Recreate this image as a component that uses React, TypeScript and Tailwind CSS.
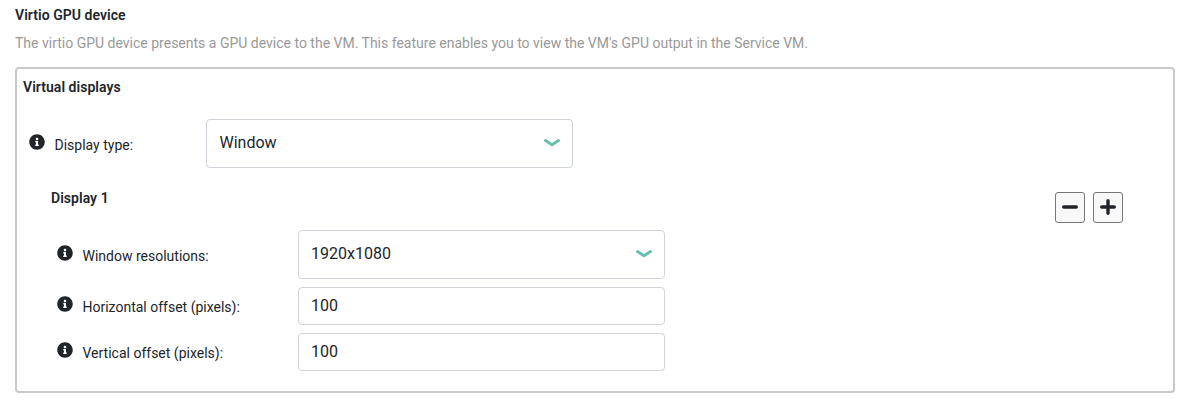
import { ReactNode } from "react";
import { FaInfoCircle } from "react-icons/fa";

function Label({ children, className }: { children: ReactNode; className: string }) {
  return (
    <label className={`flex shrink-0 ${className}`}>
      <FaInfoCircle className="mt-px size-4 shrink-0" />
      <span className="ml-[9.5px] mt-0.5 leading-[21px]">{children}</span>
    </label>
  );
}

function Select({ value, className = "pl-3" }: { value: string; className?: string }) {
  return (
    <div
      className={`flex h-[49px] w-[367px] items-start justify-between rounded-[4px] border border-[#ced4da] bg-white pr-3 pt-[11px] text-base leading-6 ${className}`}
    >
      <span>{value}</span>
      <svg className="mt-2 h-2 w-4" viewBox="0 0 16 8" fill="none">
        <path d="M1.5 1.6 L8 5.7 L14.5 1.6" stroke="#69bfad" strokeWidth="3" strokeLinecap="round" strokeLinejoin="round" />
      </svg>
    </div>
  );
}

function Field({ value }: { value: string }) {
  return (
    <input
      className="h-[38px] w-[367px] rounded-[4px] border border-[#ced4da] bg-white px-3 pb-0.5 text-base"
      defaultValue={value}
    />
  );
}

function IconButton({ label, d }: { label: string; d: string }) {
  return (
    <button
      aria-label={label}
      className="flex h-[31px] w-[30px] items-start justify-center rounded-[3px] border border-[#767676] bg-[#f8f8f8] pt-1.5"
    >
      <svg className="size-4" viewBox="0 0 16 16" fill="none">
        <path d={d} stroke="currentColor" strokeWidth="3.4" strokeLinecap="round" />
      </svg>
    </button>
  );
}

export default function App() {
  return (
    <main className="h-[406px] bg-white px-[15px] pt-[5px] font-['Roboto',sans-serif] text-sm leading-[21px] text-[#212529]">
      <h1 className="font-semibold tracking-[0.04px]">Virtio GPU device</h1>
      <p className="mt-[7px] text-[#999999]">
        The virtio GPU device presents a GPU device to the VM. This feature enables you to view the VM's GPU output in the Service VM.
      </p>
      <section className="mt-[13px] h-[326px] w-[1160px] rounded-[4px] border-2 border-[#c9c9c9] pt-2">
        <h2 className="pl-1.5 font-semibold tracking-[0.04px]">Virtual displays</h2>
        <div className="mt-[21px] flex pl-3">
          <Label className="w-[177px] pt-[14px]">Display type:</Label>
          <Select value="Window" className="pl-[12.5px]" />
        </div>
        <div className="mt-5 flex justify-between pl-[34px] pr-[50px]">
          <h3 className="font-semibold tracking-[0.04px]">Display 1</h3>
          <div className="mt-1 flex gap-2">
            <IconButton label="Remove display" d="M1.7 8 H14.3" />
            <IconButton label="Add display" d="M1.7 8 H14.3 M8 1.7 V14.3" />
          </div>
        </div>
        <div className="mt-[7px] flex flex-col pl-10">
          <div className="flex">
            <Label className="w-[241px] pt-[14px]">Window resolutions:</Label>
            <Select value="1920x1080" />
          </div>
          <div className="mt-2 flex">
            <Label className="w-[241px] pt-2">Horizontal offset (pixels):</Label>
            <Field value="100" />
          </div>
          <div className="mt-2 flex">
            <Label className="w-[241px] pt-2">Vertical offset (pixels):</Label>
            <Field value="100" />
          </div>
        </div>
      </section>
    </main>
  );
}
